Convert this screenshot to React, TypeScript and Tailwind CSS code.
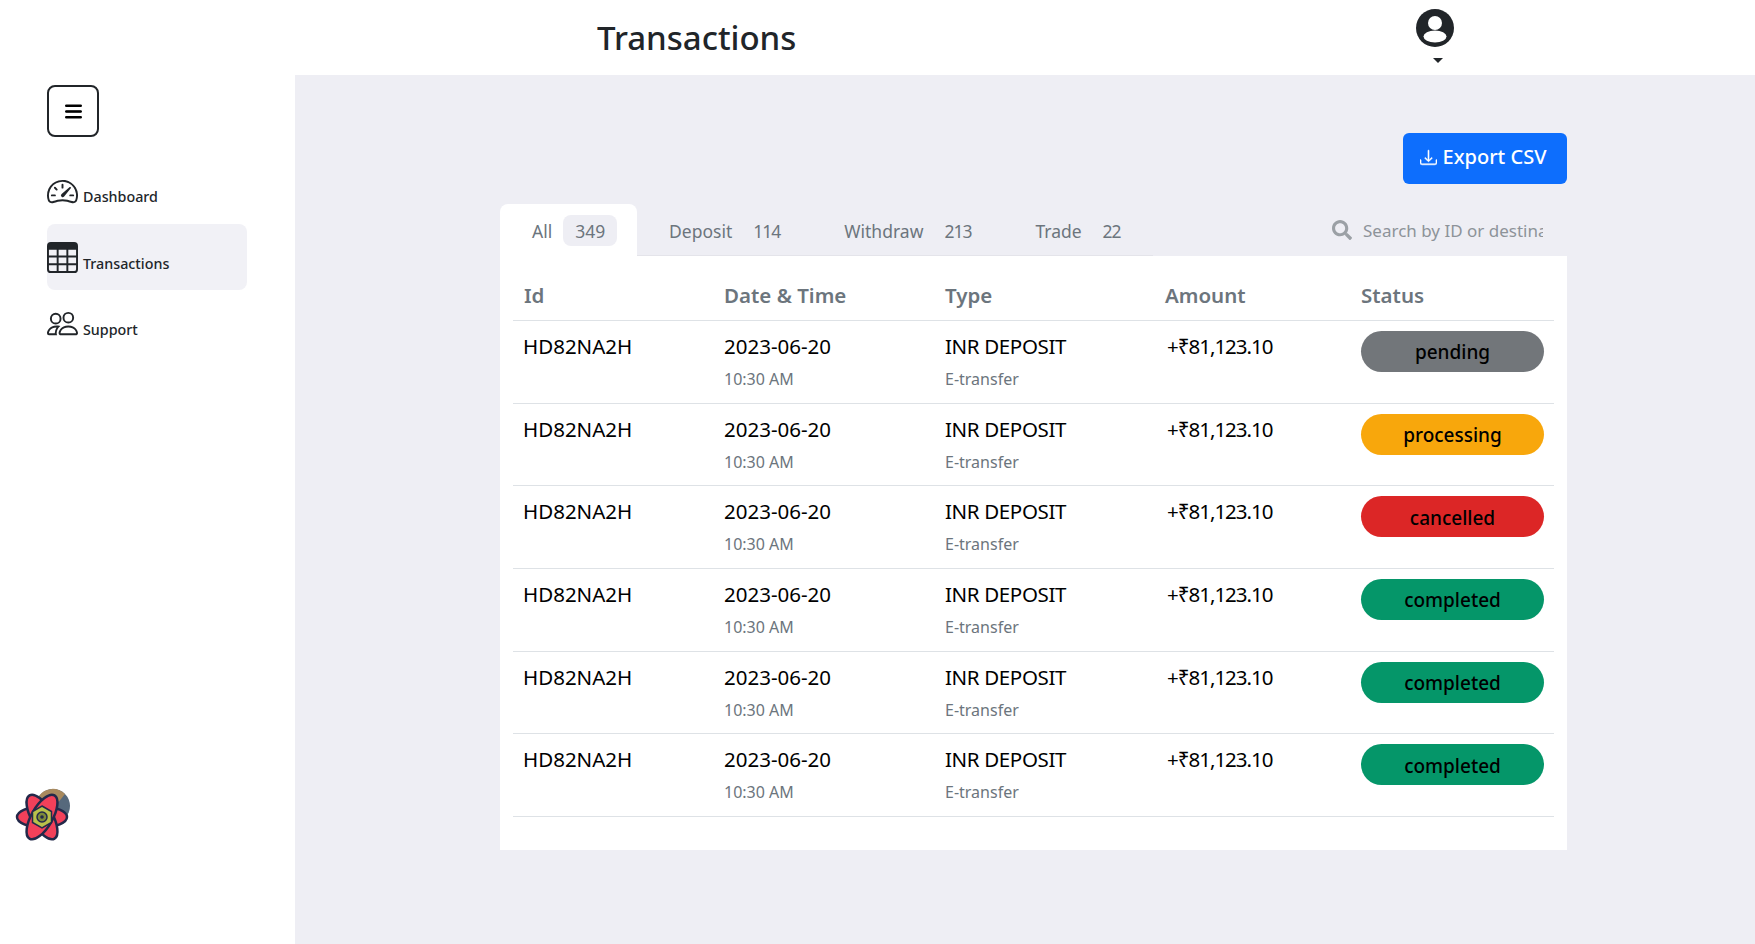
import React, { FC } from "react";
import { BsDownload, BsList, BsPeople, BsSpeedometer2, BsTable } from "react-icons/bs";
import { FaSearch } from "react-icons/fa";

const statuses: { label: string; color: string }[] = [
  { label: "pending", color: "bg-[#72767a]" },
  { label: "processing", color: "bg-[#f8a70c]" },
  { label: "cancelled", color: "bg-[#dc2626]" },
  { label: "completed", color: "bg-[#059669]" },
  { label: "completed", color: "bg-[#059669]" },
  { label: "completed", color: "bg-[#059669]" },
];

const tabs = [
  { label: "Deposit", count: 114 },
  { label: "Withdraw", count: 213 },
  { label: "Trade", count: 22 },
];

const Logo: FC = () => (
  <svg width="56" height="58" viewBox="0 0 56 58">
    <circle cx="38" cy="18" r="17" fill="#56697c" />
    <path d="M24 8a17 17 0 0 1 26-2l-8 10-10-2z" fill="#a98a5e" />
    {[0, 60, 120].map((angle) => (
      <ellipse
        key={angle}
        cx="27"
        cy="29"
        rx="25"
        ry="10.5"
        fill="#f2405a"
        stroke="#23294a"
        strokeWidth="2.5"
        transform={`rotate(${angle} 27 29)`}
      />
    ))}
    <path d="M27 18l9.5 5.5v11L27 40l-9.5-5.5v-11z" fill="#b9c04a" stroke="#23294a" strokeWidth="1.5" />
    <circle cx="27" cy="29" r="5" fill="#7c8a3a" stroke="#23294a" strokeWidth="1.5" />
    <circle cx="27" cy="29" r="1.8" fill="#23294a" />
  </svg>
);

const UserIcon: FC = () => (
  <svg width="38" height="38" viewBox="0 0 38 38">
    <circle cx="19" cy="19" r="19" fill="#212529" />
    <circle cx="19" cy="14" r="7" fill="#ffffff" />
    <ellipse cx="19" cy="27.5" rx="11.5" ry="6" fill="#ffffff" />
  </svg>
);

const Row: FC<{ label: string; color: string }> = ({ label, color }) => (
  <div className="grid grid-cols-[200px_221px_220px_196px_1fr] h-[82.7px] border-b border-[#dee2e6] pl-[11px] pt-[10px]">
    <div className="text-[20.5px] leading-[30px] text-black -ml-[1px]">HD82NA2H</div>
    <div>
      <div className="text-[20.5px] leading-[30px] text-black">2023-06-20</div>
      <div className="text-[16px] leading-[24px] mt-[6px] text-[#6c757d]">10:30 AM</div>
    </div>
    <div>
      <div className="text-[20.5px] leading-[30px] text-black tracking-[-0.35px]">INR DEPOSIT</div>
      <div className="text-[16px] leading-[24px] mt-[6px] text-[#6c757d]">E-transfer</div>
    </div>
    <div className="text-[20.5px] leading-[30px] text-black tracking-[-1px] pl-[2px]">+₹81,123.10</div>
    <div className={`${color} w-[183px] h-[41px] pt-[2px] rounded-full flex items-center justify-center text-[19px] font-medium text-black`}>
      {label}
    </div>
  </div>
);

const App: FC = () => {
  return (
    <div className="h-[944px] flex flex-col bg-white font-['Noto_Sans','Open_Sans',sans-serif] overflow-hidden">
      <header className="h-[75px] shrink-0 flex relative">
        <h1 className="ml-[597px] mt-[13px] text-[33px] leading-[50px] font-medium text-[#212529]">Transactions</h1>
        <div className="absolute left-[1415px] top-[9px] flex flex-col items-center w-[40px]">
          <UserIcon />
          <div className="mt-[11px] ml-[5px] w-0 h-0 border-x-[5px] border-x-transparent border-t-[5px] border-t-[#212529]" />
        </div>
      </header>
      <div className="flex flex-1">
        <aside className="w-[295px] shrink-0 flex flex-col pl-[47px] pr-[48px]">
          <button className="mt-[10px] w-[52px] h-[52px] rounded-[8px] border-2 border-[#212529] flex items-center justify-center">
            <BsList className="text-[23px] text-black" strokeWidth="0.8" />
          </button>
          <nav className="mt-[21px] flex flex-col">
            <div className="h-[66px] flex items-center gap-[5px] text-[14.3px] font-medium text-[#212529]">
              <BsSpeedometer2 className="text-[31px] mt-[0px]" />
              <span className="mt-[12px]">Dashboard</span>
            </div>
            <div className="h-[66px] flex items-center gap-[5px] text-[14.3px] font-medium rounded-[8px] bg-[#f1f1f6] text-[#212529]">
              <BsTable className="text-[31px] mt-[1px]" />
              <span className="mt-[13px]">Transactions</span>
            </div>
            <div className="h-[66px] flex items-center gap-[5px] text-[14.3px] font-medium text-[#212529]">
              <BsPeople className="text-[31px] mt-[1px]" />
              <span className="mt-[13px]">Support</span>
            </div>
          </nav>
          <div className="mt-[432px] -ml-[32px]">
            <Logo />
          </div>
        </aside>
        <main className="flex-1 bg-[#eeeef4] pl-[205px] pr-[188px] pt-[58px]">
          <div className="flex justify-end">
            <button className="w-[164px] h-[51px] pb-[3px] rounded-[6px] bg-[#0d6efd] text-white text-[20px] font-medium flex items-center justify-center gap-[6px] pr-[4px]">
              <BsDownload className="text-[17px]" strokeWidth="0.5" />
              Export CSV
            </button>
          </div>
          <div className="mt-[20px] flex items-stretch h-[52px]">
            <div className="w-[137px] bg-white rounded-t-[8px] flex items-center pl-[32px] text-[17.5px] text-[#6c757d]">
              <span className="pt-[2px]">All</span>
              <span className="ml-[11px] w-[54px] h-[31px] pt-[2px] bg-[#eeeef4] rounded-[8px] flex items-center justify-center">349</span>
            </div>
            {tabs.map((tab) => (
              <div key={tab.label} className="px-[32px] pt-[3px] flex items-center gap-[21px] text-[17.5px] text-[#6c757d] border-b border-[#e4e4ea]">
                {tab.label}
                <span className="tracking-[-1px]">{tab.count}</span>
              </div>
            ))}
            <div className="flex-1 flex items-center justify-end pr-[24px]">
              <FaSearch className="text-[20px] text-[#9ba0a5] mr-[11px]" />
              <input
                readOnly
                placeholder="Search by ID or destination"
                className="w-[180px] pt-[1px] bg-transparent outline-none text-[17px] placeholder:text-[#8d9399]"
              />
            </div>
          </div>
          <div className="bg-white h-[594px] px-[13px]">
            <div className="grid grid-cols-[200px_221px_220px_196px_1fr] h-[65px] border-b border-[#dee2e6] pl-[11px] pt-[24px] text-[20.5px] leading-[30px] font-semibold text-[#6c757d]">
              <div>Id</div>
              <div>Date &amp; Time</div>
              <div>Type</div>
              <div>Amount</div>
              <div>Status</div>
            </div>
            {statuses.map((status, i) => (
              <Row key={i} label={status.label} color={status.color} />
            ))}
          </div>
        </main>
      </div>
    </div>
  );
};

export default App;
